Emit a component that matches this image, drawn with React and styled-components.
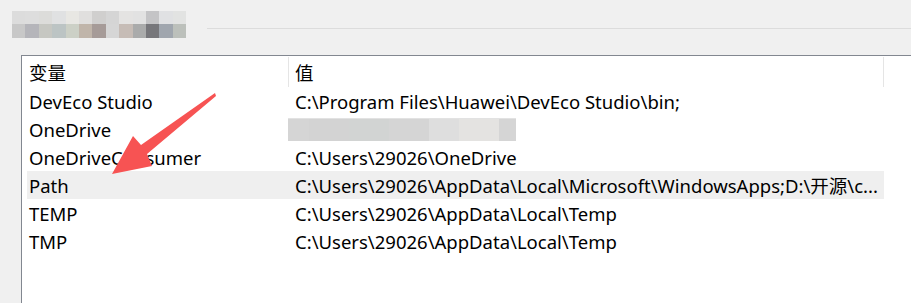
import styled, { createGlobalStyle } from 'styled-components'

const GlobalStyle = createGlobalStyle`
	html, body {
		margin: 0;
		padding: 0;
		background: #f0f0f0;
		overflow: hidden;
	}
`;

const topMosaic = [
	['#dcdcdc', '#dddddd', '#dcdcda', '#e0e1e2', '#e8e7e3', '#e0dfde', '#d0cfce', '#d5d5d5', '#e4e3e2', '#e2e2e2', '#c4c4c6', '#e0e1e3', '#e2e3e2'],
	['#c8c8c8', '#b5b5ba', '#c6c7c2', '#bcc4c4', '#ccd0c6', '#c0b5aa', '#a69b98', '#d6d6d6', '#c6bcb6', '#aaabab', '#77777b', '#a0a6ae', '#bcc0bb'],
];

const valueMosaic = [
	{ w: 21, c: '#d5d5d5' },
	{ w: 40, c: '#d3d3d3' },
	{ w: 40, c: '#d2d4d3' },
	{ w: 40, c: '#d5d5d5' },
	{ w: 30, c: '#dedede' },
	{ w: 40, c: '#e4e3e1' },
	{ w: 17, c: '#d5d5d5' },
];

const rows = [
	{ name: 'DevEco Studio', value: 'C:\\Program Files\\Huawei\\DevEco Studio\\bin;' },
	{ name: 'OneDrive', hidden: true },
	{ name: 'OneDriveConsumer', value: 'C:\\Users\\29026\\OneDrive' },
	{ name: 'Path', value: 'C:\\Users\\29026\\AppData\\Local\\Microsoft\\WindowsApps;D:\\开源\\c...', selected: true },
	{ name: 'TEMP', value: 'C:\\Users\\29026\\AppData\\Local\\Temp' },
	{ name: 'TMP', value: 'C:\\Users\\29026\\AppData\\Local\\Temp' },
];

const Frame = styled.div`
	width: 911px;
	height: 303px;
	display: flex;
	flex-direction: column;
	font-family: "Noto Sans", "Noto Sans CJK SC", sans-serif;
	font-size: 18.5px;
	color: #000;
`;

const TitleRow = styled.div`
	display: flex;
	padding: 11px 0 0 12px;
`;

const Mosaic = styled.div`
	display: grid;
	grid-template-columns: repeat(13, 13.4px);
	grid-template-rows: 13px 14px;
`;

const Tile = styled.div`
	background: ${p => p.$c};
`;

const Rule = styled.div`
	flex: 1;
	height: 1px;
	margin: 17px 0 0 21px;
	background: #dcdcdc;
`;

const ListBox = styled.div`
	position: relative;
	flex: 1;
	margin: 17px 0 0 21px;
	border-top: 1px solid #828790;
	border-left: 1px solid #828790;
	background: #fff;
	padding-left: 5px;
`;

const HeaderRow = styled.div`
	display: grid;
	grid-template-columns: 261px 595px 1fr;
	height: 31px;
`;

const HeaderCell = styled.div`
	display: flex;
	align-items: center;
	padding-left: ${p => (p.$first ? '2px' : '6px')};
	border-left: ${p => (p.$first ? 'none' : '1px solid #e5e5e5')};
	margin: 1px 0 0;
`;

const Row = styled.div`
	display: grid;
	grid-template-columns: 261px 596px;
	width: 857px;
	height: 28px;
	background: ${p => (p.$selected ? '#efefef' : 'transparent')};
`;

const Cell = styled.div`
	display: flex;
	align-items: center;
	white-space: nowrap;
	overflow: hidden;
	padding-left: ${p => (p.$first ? '2px' : '7px')};
`;

const Blur = styled.div`
	display: flex;
	height: 23px;
	margin-left: -7px;
	border-top: 1px solid #e2e2e2;
	box-sizing: border-box;
`;

const BlurBlock = styled.div`
	background: ${p => p.$c};
`;

const Arrow = styled.svg`
	position: absolute;
	left: -22px;
	top: -56px;
	pointer-events: none;
`;

function App() {
	return (
		<>
			<GlobalStyle />
			<Frame>
				<TitleRow>
					<Mosaic>
						{topMosaic.flat().map((c, i) => (
							<Tile key={i} $c={c} />
						))}
					</Mosaic>
					<Rule />
				</TitleRow>
				<ListBox>
					<HeaderRow>
						<HeaderCell $first>变量</HeaderCell>
						<HeaderCell>值</HeaderCell>
						<HeaderCell />
					</HeaderRow>
					{rows.map(r => (
						<Row key={r.name} $selected={r.selected}>
							<Cell $first>{r.name}</Cell>
							<Cell>
								{r.hidden ? (
									<Blur>
										{valueMosaic.map((b, i) => (
											<BlurBlock key={i} $c={b.c} style={{ width: b.w }} />
										))}
									</Blur>
								) : (
									r.value
								)}
							</Cell>
						</Row>
					))}
					<Arrow width="911" height="303" viewBox="0 0 911 303">
						<path
							d="M215 93 L141 145 L133 136 L112 174 L152 166 L147 154 L216 96 Z"
							fill="#f75353"
						/>
					</Arrow>
				</ListBox>
			</Frame>
		</>
	)
}

export default App
